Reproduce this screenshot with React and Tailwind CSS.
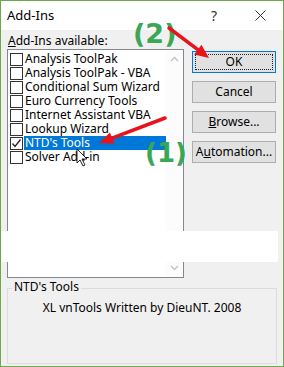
import React from "react";

const items = [
  { name: "Analysis ToolPak" },
  { name: "Analysis ToolPak - VBA" },
  { name: "Conditional Sum Wizard" },
  { name: "Euro Currency Tools" },
  { name: "Internet Assistant VBA" },
  { name: "Lookup Wizard" },
  { name: "NTD's Tools", checked: true, selected: true },
  { name: "Solver Add-in" },
];

function Checkbox({ checked }) {
  return (
    <span className="w-[13px] h-[13px] border border-[#333] bg-white flex items-center justify-center shrink-0">
      {checked && (
        <svg width="11" height="11" viewBox="0 0 11 11">
          <path d="M1.5 5.5 L4 8.5 L9.5 1.5" fill="none" stroke="#222" strokeWidth="1.3" />
        </svg>
      )}
    </span>
  );
}

function Button({ children, focused }) {
  return (
    <div
      className={
        "w-[84px] h-[22px] flex items-center justify-center text-[12px] text-black bg-[#e1e1e1] border " +
        (focused ? "border-[#0078d7] p-[2px]" : "border-[#adadad]")
      }
    >
      {focused ? (
        <span className="w-full h-full border border-dotted border-[#222] flex items-center justify-center">
          {children}
        </span>
      ) : (
        children
      )}
    </div>
  );
}

function Arrow({ x1, y1, x2, y2 }) {
  const a = Math.atan2(y2 - y1, x2 - x1);
  const len = 14;
  const w = 6;
  const bx = x2 - len * Math.cos(a);
  const by = y2 - len * Math.sin(a);
  const px = -Math.sin(a) * w;
  const py = Math.cos(a) * w;
  return (
    <g>
      <line x1={x1} y1={y1} x2={bx} y2={by} stroke="#e8141b" strokeWidth="3.5" strokeLinecap="round" />
      <polygon points={`${x2},${y2} ${bx + px},${by + py} ${bx - px},${by - py}`} fill="#e8141b" />
    </g>
  );
}

export default function App() {
  return (
    <div
      className="relative w-[284px] h-[367px] border border-[#6fa84a] bg-[#f0f0f0] overflow-hidden text-black"
      style={{ fontFamily: '"Noto Sans", "Open Sans", sans-serif' }}
    >
      {/* title bar */}
      <div className="h-[29px] bg-white flex items-center pl-[6px] pr-[17px]">
        <span className="text-[13px] flex-1">Add-Ins</span>
        <span className="text-[14px] text-[#333] mr-[38px]">?</span>
        <svg width="11" height="11" viewBox="0 0 11 11">
          <path d="M0.5 0.5 L10.5 10.5 M10.5 0.5 L0.5 10.5" stroke="#333" strokeWidth="1" />
        </svg>
      </div>

      <div className="flex px-[6px] pt-[2px]">
        {/* left column */}
        <div className="w-[177px]">
          <div className="text-[12px] h-[17px] leading-[17px] pl-[1px]">
            <span className="underline">A</span>dd-Ins available:
          </div>
          <div className="h-[229px] border border-[#828790] bg-white flex">
            <div className="flex-1 pt-[2px]">
              {items.map((it) => (
                <div key={it.name} className="h-[14px] flex items-center pl-[2px]">
                  <Checkbox checked={it.checked} />
                  <span
                    className={
                      "ml-[1px] pl-[1px] h-[14px] flex-1 text-[12px] leading-[14px] whitespace-nowrap " +
                      (it.selected ? "bg-[#0078d7] text-white" : "")
                    }
                  >
                    {it.name}
                  </span>
                </div>
              ))}
            </div>
            <div className="w-[17px] bg-[#fcfcfc] flex flex-col items-center justify-between py-[6px]">
              <svg width="9" height="6" viewBox="0 0 9 6">
                <path d="M1 5 L4.5 1.5 L8 5" fill="none" stroke="#c4c4c4" strokeWidth="1.5" />
              </svg>
              <svg width="9" height="6" viewBox="0 0 9 6">
                <path d="M1 1 L4.5 4.5 L8 1" fill="none" stroke="#c4c4c4" strokeWidth="1.5" />
              </svg>
            </div>
          </div>
        </div>

        {/* buttons */}
        <div className="ml-[8px] pt-[19px] flex flex-col gap-[8px]">
          <Button focused>OK</Button>
          <Button>Cancel</Button>
          <Button>
            <span>
              <span className="underline">B</span>rowse...
            </span>
          </Button>
          <Button>
            <span>
              A<span className="underline">u</span>tomation...
            </span>
          </Button>
        </div>
      </div>

      {/* group box */}
      <div className="mx-[6px] mt-[10px] h-[76px] border border-[#dcdcdc] relative">
        <span className="absolute -top-[10px] left-[4px] px-[2px] bg-[#f0f0f0] text-[12px] leading-[16px]">
          NTD's Tools
        </span>
        <div className="pt-[10px] text-center text-[12px]">XL vnTools Written by DieuNT. 2008</div>
      </div>

      {/* white patch over the list */}
      <div className="absolute left-0 top-[230px] w-[277px] h-[31px] bg-white" />

      {/* annotations */}
      <span
        className="absolute left-[132px] top-[19px] text-[27px] font-bold text-[#3aa757] leading-none"
        style={{ fontFamily: '"DejaVu Sans", sans-serif' }}
      >
        (2)
      </span>
      <span
        className="absolute left-[144px] top-[139px] text-[26px] font-bold text-[#3aa757] leading-none"
        style={{ fontFamily: '"DejaVu Sans", sans-serif' }}
      >
        (1)
      </span>
      <svg className="absolute left-0 top-0" width="284" height="367">
        <Arrow x1={168} y1={27} x2={208} y2={57} />
        <Arrow x1={164} y1={117} x2={98} y2={142} />
        {/* mouse cursor */}
        <path
          d="M76 148 L76 162 L79 159 L82 165 L84 164 L81 158 L86 158 Z"
          fill="#fff"
          stroke="#111"
          strokeWidth="0.9"
          strokeLinejoin="round"
        />
      </svg>
    </div>
  );
}
